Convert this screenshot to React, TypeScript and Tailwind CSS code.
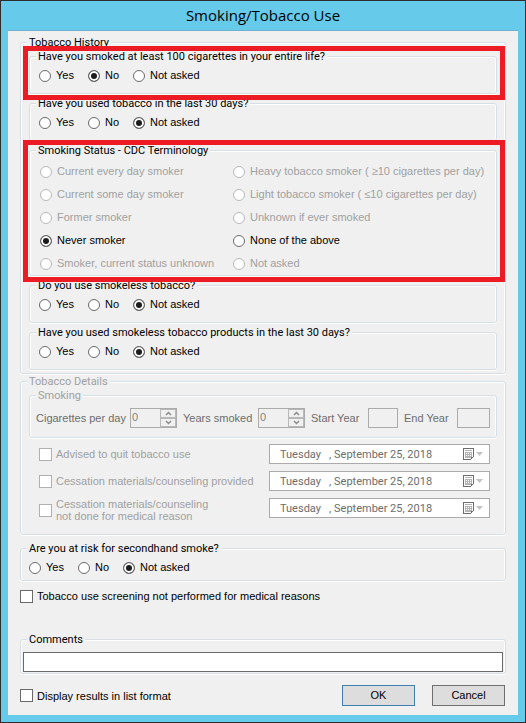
import { useState } from 'react'
import type { ReactNode } from 'react'

interface GroupProps {
  title: string
  disabled?: boolean
  className?: string
  children: ReactNode
}

interface ChoiceProps {
  name: string
  label: string
  checked: boolean
  disabled?: boolean
  onSelect: () => void
}

const answers = ['Yes', 'No', 'Not asked']

const statusOptions = [
  { label: 'Current every day smoker', disabled: true },
  { label: 'Heavy tobacco smoker ( ≥10 cigarettes per day)', disabled: true },
  { label: 'Current some day smoker', disabled: true },
  { label: 'Light tobacco smoker ( ≤10 cigarettes per day)', disabled: true },
  { label: 'Former smoker', disabled: true },
  { label: 'Unknown if ever smoked', disabled: true },
  { label: 'Never smoker', disabled: false },
  { label: 'None of the above', disabled: false },
  { label: 'Smoker, current status unknown', disabled: true },
  { label: 'Not asked', disabled: true }
]

const counseling = [
  { id: 'advised', lines: ['Advised to quit tobacco use'] },
  { id: 'provided', lines: ['Cessation materials/counseling provided'] },
  { id: 'not-done', lines: ['Cessation materials/counseling', 'not done for medical reason'] }
]

function Group({ title, disabled = false, className = '', children }: GroupProps) {
  return (
    <fieldset
      disabled={disabled}
      className={`min-w-0 rounded-[3px] border border-[#d5dfe5] shadow-[inset_1px_0_0_#fff,inset_-1px_0_0_#fff,inset_0_1px_0_#fff,0_1px_0_#fff] ${className}`}
    >
      <legend
        className={`ml-[6px] bg-[#f0f0f0] px-[2px] font-[Roboto,'Liberation_Sans',sans-serif] leading-[13px] ${disabled ? 'text-[#a0a0a0]' : ''}`}
      >
        {title}
      </legend>
      {children}
    </fieldset>
  )
}

function Choice({ name, label, checked, disabled = false, onSelect }: ChoiceProps) {
  return (
    <label className={`flex items-center gap-[5px] whitespace-nowrap ${disabled ? 'text-[#a0a0a0]' : ''}`}>
      <input
        type="radio"
        name={name}
        checked={checked}
        disabled={disabled}
        onChange={onSelect}
        className="size-3 shrink-0 appearance-none rounded-full border border-[#6a6a6a] bg-white checked:bg-[#1c1c1c] checked:shadow-[inset_0_0_0_2px_#fff] disabled:border-[#b8b8b8]"
      />
      {label}
    </label>
  )
}

function AnswerRow({ name, initial }: { name: string; initial: string }) {
  const [value, setValue] = useState(initial)
  return (
    <div className="flex h-[13px] items-center gap-[14px]">
      {answers.map((answer) => (
        <Choice key={answer} name={name} label={answer} checked={value === answer} onSelect={() => setValue(answer)} />
      ))}
    </div>
  )
}

function Question({ title, name, initial }: { title: string; name: string; initial: string }) {
  return (
    <Group title={title} className="pt-0 pb-[11px]">
      <div className="pt-[6px] pl-[9px]">
        <AnswerRow name={name} initial={initial} />
      </div>
    </Group>
  )
}

// Red frame drawn around the sections that need attention
function Highlight({ children }: { children: ReactNode }) {
  return (
    <div className="relative">
      {children}
      <div className="pointer-events-none absolute -top-1 -right-2 -bottom-[6px] -left-[6px] z-10 border-[5px] border-[#ed1c24]" />
    </div>
  )
}

function Check({ label, disabled = false }: { label: ReactNode; disabled?: boolean }) {
  return (
    <label className={`flex min-h-5 items-center gap-1 ${disabled ? 'text-[#a0a0a0]' : ''}`}>
      <input
        type="checkbox"
        disabled={disabled}
        className="size-[13px] shrink-0 appearance-none border border-[#6a6a6a] bg-white checked:bg-[#1c1c1c] checked:shadow-[inset_0_0_0_2px_#fff] disabled:border-[#b0b0b0]"
      />
      <span className="leading-3">{label}</span>
    </label>
  )
}

function Arrow({ up = false }: { up?: boolean }) {
  return (
    <svg viewBox="0 0 7 5" className="h-[5px] w-[7px]" fill="none" stroke="#8c8c8c" strokeWidth="1.5">
      <path d={up ? 'M1 4l2.5-2.5L6 4' : 'M1 1l2.5 2.5L6 1'} />
    </svg>
  )
}

function Spinner({ id }: { id: string }) {
  return (
    <div className="flex h-5 w-[47px] shrink-0 border border-[#ababab]">
      <input id={id} defaultValue="0" className="w-0 min-w-0 flex-1 pb-[2px] pl-px text-[#838383]" />
      <div className="flex w-4 flex-col">
        <button aria-label="Increase" className="flex flex-1 items-center justify-center border border-[#b8b8b8]">
          <Arrow up />
        </button>
        <button aria-label="Decrease" className="flex flex-1 items-center justify-center border border-[#b8b8b8]">
          <Arrow />
        </button>
      </div>
    </div>
  )
}

function DateField() {
  return (
    <div className="flex h-5 min-w-0 flex-1 items-center border border-[#ababab] bg-white pr-[6px] text-[#6d6d6d]">
      <input
        aria-label="Date"
        defaultValue="Tuesday   , September 25, 2018"
        className="min-w-0 flex-1 pl-[10px] font-[Roboto,'Liberation_Sans',sans-serif]"
      />
      <button aria-label="Open calendar" className="flex items-center gap-[2px]">
        <svg viewBox="0 0 11 12" className="h-3 w-[11px]" shapeRendering="crispEdges">
          <path d="M0 0h11v9h-1v1H9v1H8v1H0z" fill="#6d6d6d" />
          <path d="M1 1h9v8H8v2H1z" fill="#fff" />
          <path d="M2 2h7v1H2zM2 4h7v5H8v1H2z" fill="#b4b4b4" />
          <path d="M3 5h1v1H3zM5 5h1v1H5zM7 5h1v1H7zM3 7h1v1H3zM5 7h1v1H5zM7 7h1v1H7z" fill="#fff" />
        </svg>
        <svg viewBox="0 0 7 4" className="h-1 w-[7px]">
          <path d="M0 0h7L3.5 4z" fill="#c3c3c3" />
        </svg>
      </button>
    </div>
  )
}

export default function App() {
  const [status, setStatus] = useState('Never smoker')

  return (
    <div className="flex min-h-screen flex-col border border-[#2d2d2d] bg-[#66cbea] px-[7px] pb-[7px] font-['Liberation_Sans',Arial,sans-serif] text-[11px] leading-[13px] text-black">
      <h1 className="flex h-[29px] items-center justify-center font-['Open_Sans','Noto_Sans',sans-serif] text-[15px]">
        Smoking/Tobacco Use
      </h1>

      <form
        onSubmit={(e) => e.preventDefault()}
        className="flex-1 border-t border-[#6fb0cc] bg-[#f0f0f0] px-3 pt-[5px] pb-2"
      >
        <Group title="Tobacco History">
          <div className="flex flex-col gap-[3px] px-2 pt-px pb-[3px]">
            <Highlight>
              <Question
                title="Have you smoked at least 100 cigarettes in your entire life?"
                name="smoked-100"
                initial="No"
              />
            </Highlight>
            <Question title="Have you used tobacco in the last 30 days?" name="used-30" initial="Not asked" />
            <Highlight>
              <Group title="Smoking Status - CDC Terminology">
                <div className="grid auto-rows-[23px] grid-cols-[193px_1fr] pt-[3px] pl-[10px]">
                  {statusOptions.map((option) => (
                    <Choice
                      key={option.label}
                      name="status"
                      label={option.label}
                      disabled={option.disabled}
                      checked={status === option.label}
                      onSelect={() => setStatus(option.label)}
                    />
                  ))}
                </div>
              </Group>
            </Highlight>
            <Question title="Do you use smokeless tobacco?" name="smokeless" initial="Not asked" />
            <Question
              title="Have you used smokeless tobacco products in the last 30 days?"
              name="smokeless-30"
              initial="Not asked"
            />
          </div>
        </Group>

        <Group title="Tobacco Details" disabled className="mt-px">
          <div className="px-2 pt-px pb-3">
            <Group title="Smoking" disabled>
              <div className="flex items-center px-[6px] pt-[6px] pb-[9px] whitespace-nowrap text-[#6d6d6d]">
                <label htmlFor="per-day" className="w-[94px] shrink-0">Cigarettes per day</label>
                <Spinner id="per-day" />
                <label htmlFor="years" className="ml-[6px] w-[75px] shrink-0">Years smoked</label>
                <Spinner id="years" />
                <label htmlFor="start" className="ml-[6px] w-[57px] shrink-0">Start Year</label>
                <input id="start" className="h-5 w-[30px] min-w-0 border border-[#ababab]" />
                <label htmlFor="end" className="ml-[6px] w-[53px] shrink-0">End Year</label>
                <input id="end" className="h-5 w-0 min-w-0 flex-1 border border-[#ababab]" />
              </div>
            </Group>

            <div className="flex flex-col gap-[7px] pt-[6px] pr-[7px] pl-[10px]">
              {counseling.map((item) => (
                <div key={item.id} className="flex items-start">
                  <div className="w-[230px] shrink-0">
                    <Check
                      disabled
                      label={item.lines.map((line) => (
                        <span key={line} className="block">{line}</span>
                      ))}
                    />
                  </div>
                  <DateField />
                </div>
              ))}
            </div>
          </div>
        </Group>

        <Group title="Are you at risk for secondhand smoke?" className="mt-[7px]">
          <div className="pt-[6px] pb-[6px] pl-2">
            <AnswerRow name="secondhand" initial="Not asked" />
          </div>
        </Group>

        <div className="mt-[5px]">
          <Check label="Tobacco use screening not performed for medical reasons" />
        </div>

        <Group title="Comments" className="mt-[27px]">
          <div className="px-[2px] pt-[6px] pb-px">
            <input aria-label="Comments" className="block h-5 w-full border border-[#6a6a6a] bg-white px-1" />
          </div>
        </Group>

        <div className="mt-[11px] flex items-center pr-px">
          <Check label="Display results in list format" />
          <button type="submit" className="ml-auto h-[21px] w-[73px] border border-[#3c7fb1] bg-[#dddddd]">
            OK
          </button>
          <button type="button" className="ml-[17px] h-[21px] w-[73px] border border-[#707070] bg-[#dddddd]">
            Cancel
          </button>
        </div>
      </form>
    </div>
  )
}
